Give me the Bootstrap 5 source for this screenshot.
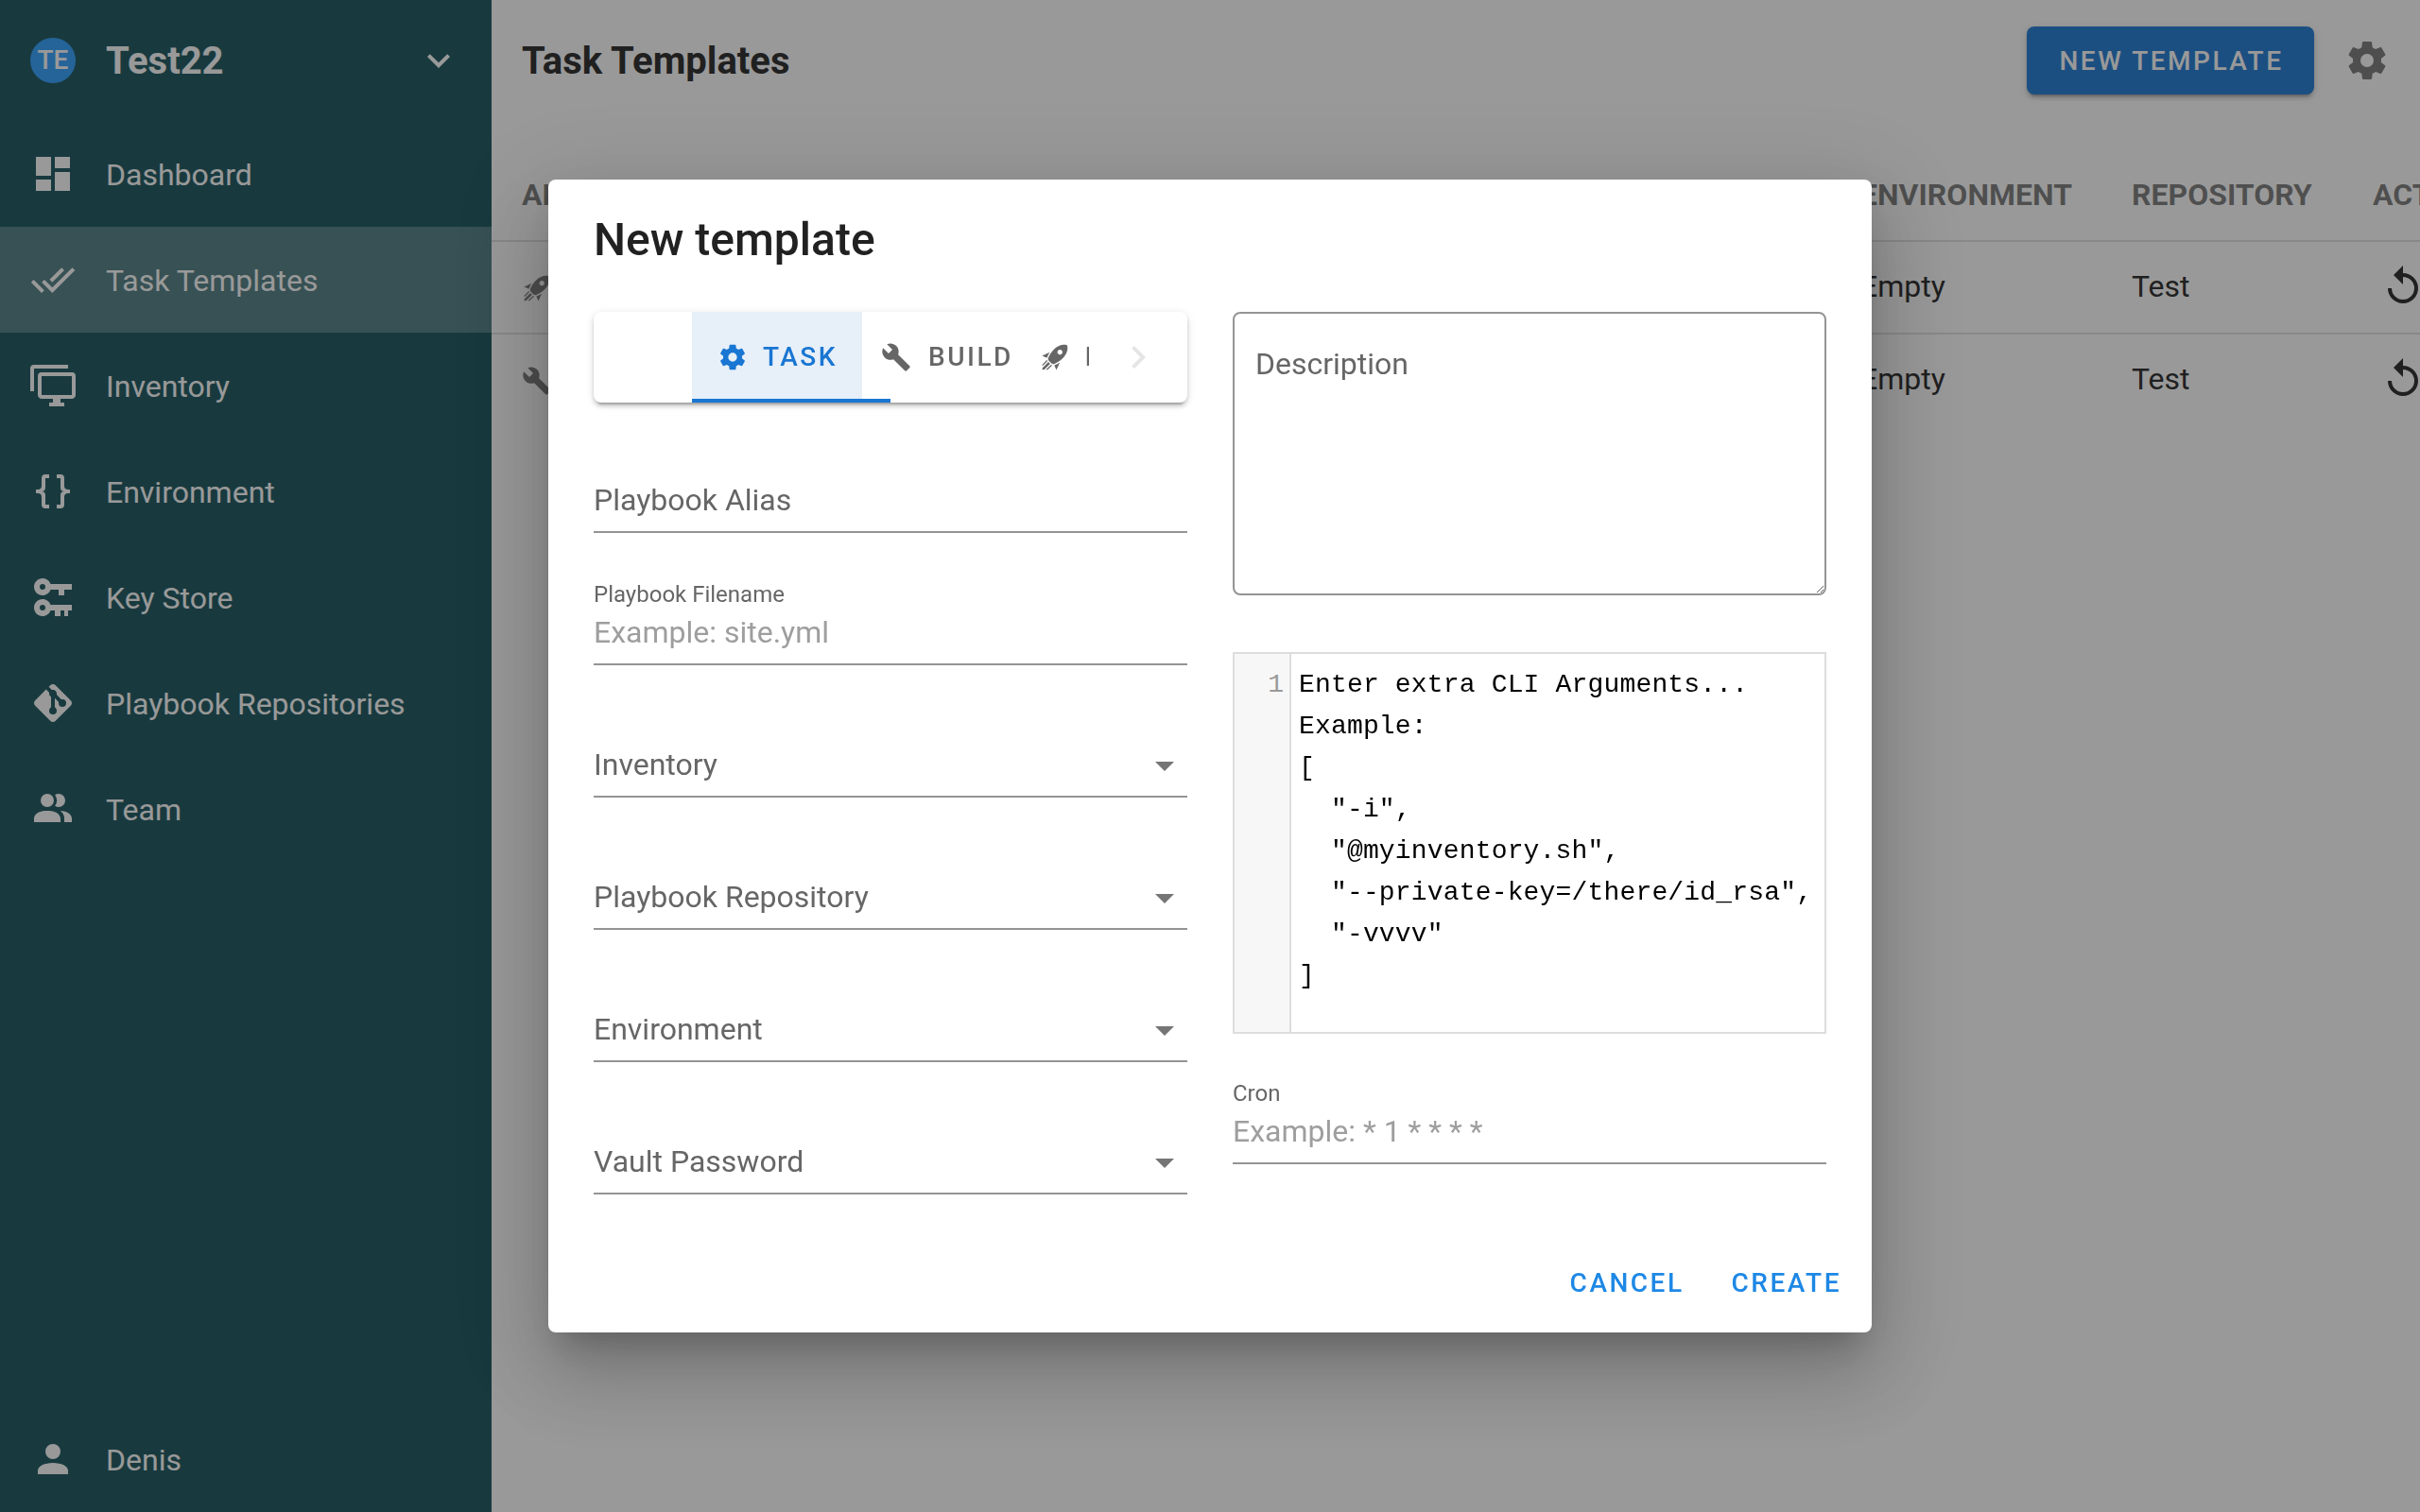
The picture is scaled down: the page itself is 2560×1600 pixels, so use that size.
<!DOCTYPE html>
<html lang="en">
<head>
<meta charset="utf-8">
<title>Task Templates</title>
<link href="https://cdn.jsdelivr.net/npm/bootstrap@5.3.0/dist/css/bootstrap.min.css" rel="stylesheet">
<style>
html,body{height:100%;overflow:hidden;}
body{font-family:Roboto,"Liberation Sans",sans-serif;font-size:32px;color:#212121;background:#fff;}
svg.ic{display:block;fill:currentColor;flex:none;}
.i48{width:48px;height:48px;}
.i32{width:32px;height:32px;}
.tpl-shell{width:2560px;height:1600px;}
.tpl-side{width:520px;flex:none;background:#125159;color:#fff;}
.tpl-side-head{height:128px;padding:0 32px;}
.tpl-avatar{width:48px;height:48px;border-radius:50%;background:#2a9eff;font-size:28px;font-weight:500;color:#fff;}
.tpl-proj{font-size:40px;font-weight:700;margin-left:32px;line-height:48px;padding-top:2px;}
.tpl-item{height:112px;padding:0 32px;color:#fff;font-size:32px;text-decoration:none;}
.tpl-item:hover{color:#fff;}
.tpl-item.tpl-on{background:rgba(255,255,255,.24);}
.tpl-item span{margin-left:32px;padding-top:2px;}
.tpl-main{flex:1 1 auto;min-width:0;overflow:hidden;}
.tpl-top{height:128px;padding:0 0 0 32px;}
.tpl-h{font-size:40px;font-weight:700;line-height:48px;margin:0;padding-top:2px;}
.tpl-newbtn{width:304px;height:72px;padding:2px 0 0 2px;background:#1976d2;border:0;border-radius:8px;color:#fff;font-size:28px;font-weight:500;letter-spacing:2.5px;box-shadow:0 6px 2px -4px rgba(0,0,0,.2),0 4px 4px 0 rgba(0,0,0,.14),0 2px 10px 0 rgba(0,0,0,.12);}
.tpl-gear{color:rgba(0,0,0,.54);margin-left:32px;margin-right:32px;}
.tpl-tablewrap{margin-top:30px;overflow:hidden;}
.tpl-table{table-layout:fixed;width:2160px;margin:0;border-collapse:separate;border-spacing:0;}
.tpl-table th,.tpl-table td{padding:0 32px;vertical-align:middle;border-bottom:2px solid rgba(0,0,0,.12);box-shadow:none;background:transparent;white-space:nowrap;}
.tpl-table th{height:98px;font-size:32px;font-weight:700;color:rgba(0,0,0,.54);letter-spacing:0;}
.tpl-table td{height:98px;font-size:32px;color:#212121;padding-bottom:2px;}
.tpl-table tr:last-child td{border-bottom:0;height:96px;}
.tpl-acticon{margin-left:8px;}
.tpl-rowicon{color:rgba(0,0,0,.54);margin-top:4px;}
.tpl-backdrop{background:#212121;}
.tpl-backdrop.show{opacity:.46;}
.tpl-dialog{max-width:none;width:1400px;margin:190px auto 0;}
.tpl-dialog .modal-content{height:1220px;border:0;border-radius:8px;box-shadow:0 22px 30px -14px rgba(0,0,0,.2),0 48px 76px 6px rgba(0,0,0,.14),0 18px 92px 16px rgba(0,0,0,.12);padding:0;}
.tpl-title{font-size:48px;font-weight:500;line-height:64px;margin:0;padding:32px 48px 44px;height:140px;color:#212121;}
.tpl-cols{padding:0 48px;gap:48px;}
.tpl-col{width:628px;flex:none;}
.tpl-tabs{height:96px;border-radius:8px;background:#fff;box-shadow:0 6px 2px -4px rgba(0,0,0,.2),0 4px 4px 0 rgba(0,0,0,.14),0 2px 10px 0 rgba(0,0,0,.12);}
.tpl-tabsarrow{width:104px;flex:none;}
.tpl-tabclip{width:420px;flex:none;overflow:hidden;position:relative;height:96px;}
.tpl-tab{height:96px;flex:none;padding:0 8px 0 20px;font-size:28px;font-weight:500;letter-spacing:2.5px;color:rgba(0,0,0,.6);white-space:nowrap;}
.tpl-tab span{margin-left:18px;}
.tpl-tab.tpl-last span{margin-left:16px;}
.tpl-tab.tpl-act{color:#1976d2;background:#e7eff9;padding:0 27px;width:180px;}
.tpl-tab.tpl-act span{margin-left:16px;}
.tpl-slider{position:absolute;left:0;bottom:0;width:210px;height:4px;background:#1976d2;}
.tpl-chev{color:rgba(0,0,0,.1);}
.tpl-field{height:140px;border-bottom:2px solid #949494;padding-bottom:16px;}
.tpl-field-first{height:138px;}
.tpl-cap{font-size:24px;line-height:28px;color:#666;margin-bottom:9px;}
.tpl-lab{font-size:32px;line-height:34px;color:#666;}
.tpl-input{border:0;outline:0;padding:0;margin:0;width:100%;height:34px;line-height:34px;font-size:32px;background:transparent;color:#212121;box-shadow:none;border-radius:0;}
.tpl-input::placeholder{color:#9e9e9e;opacity:1;}
.tpl-input:focus{box-shadow:none;background:transparent;}
.tpl-caret{width:0;height:0;border-left:10px solid transparent;border-right:10px solid transparent;border-top:10px solid #757575;margin:0 14px 10px 0;}
.tpl-desc{width:628px;height:300px;border:2px solid #949494;border-radius:8px;padding:28px 22px 0;font-size:32px;line-height:50px;color:#212121;resize:vertical;box-shadow:none;}
.tpl-desc::placeholder{color:#666;opacity:1;}
.tpl-desc:focus{border-color:#949494;box-shadow:none;}
.tpl-code{margin-top:60px;height:404px;border:2px solid #ddd;background:#fff;}
.tpl-gutter{width:60px;flex:none;background:#f7f7f7;border-right:2px solid #ddd;padding:11px 6px 0 0;text-align:right;color:#999;font-family:"Liberation Mono",monospace;font-size:28px;line-height:44px;}
.tpl-lines{margin:0;padding:11px 0 0 8px;font-family:"Liberation Mono",monospace;font-size:28px;line-height:44px;letter-spacing:.17px;color:#000;overflow:hidden;white-space:pre;flex:1;}
.tpl-cron{height:138px;}
.tpl-foot{padding:0 16px 16px;margin-top:auto;height:116px;gap:18px;}
.tpl-txtbtn{background:transparent;border:0;padding:0 16px;height:72px;font-size:28px;font-weight:500;letter-spacing:2.5px;color:#1e88e5;}
.tpl-body{flex:1 1 auto;}
</style>
</head>
<body>
<svg width="0" height="0" class="position-absolute">
<defs>
<symbol id="m-dash" viewBox="0 0 24 24"><path d="M13,3V9H21V3M13,21H21V11H13M3,21H11V15H3M3,13H11V3H3V13Z"/></symbol>
<symbol id="m-check" viewBox="0 0 24 24"><path d="M0.41,13.41L6,19L7.41,17.58L1.83,12M22.24,5.58L11.66,16.17L7.5,12L6.07,13.41L11.66,19L23.66,7M18,7L16.59,5.58L10.24,11.93L11.66,13.34L18,7Z"/></symbol>
<symbol id="m-mon" viewBox="0 0 24 24"><path d="M22,17V7H6V17H22M22,5A2,2 0 0,1 24,7V17C24,18.11 23.1,19 22,19H16V21H18V23H10V21H12V19H6C4.89,19 4,18.1 4,17V7A2,2 0 0,1 6,5H22M2,3V15H0V3A2,2 0 0,1 2,1H20V3H2Z"/></symbol>
<symbol id="m-braces" viewBox="0 0 24 24"><path d="M8,3A2,2 0 0,0 6,5V9A2,2 0 0,1 4,11H3V13H4A2,2 0 0,1 6,15V19A2,2 0 0,0 8,21H10V19H8V14A2,2 0 0,0 6,12A2,2 0 0,0 8,10V5H10V3M16,3A2,2 0 0,1 18,5V9A2,2 0 0,0 20,11H21V13H20A2,2 0 0,0 18,15V19A2,2 0 0,1 16,21H14V19H16V14A2,2 0 0,1 18,12A2,2 0 0,1 16,10V5H14V3H16Z"/></symbol>
<symbol id="m-key" viewBox="0 0 24 24"><path d="M6.5,2C8.46,2 10.13,3.25 10.74,5H22V8H18V11H15V8H10.74C10.13,9.75 8.46,11 6.5,11C4,11 2,9 2,6.5C2,4 4,2 6.5,2M6.5,5A1.5,1.5 0 0,0 5,6.5A1.5,1.5 0 0,0 6.5,8A1.5,1.5 0 0,0 8,6.5A1.5,1.5 0 0,0 6.5,5M6.5,13C8.46,13 10.13,14.25 10.74,16H22V19H20V22H18V19H16V22H13V19H10.74C10.13,20.75 8.46,22 6.5,22C4,22 2,20 2,17.5C2,15 4,13 6.5,13M6.5,16A1.5,1.5 0 0,0 5,17.5A1.5,1.5 0 0,0 6.5,19A1.5,1.5 0 0,0 8,17.5A1.5,1.5 0 0,0 6.5,16Z"/></symbol>
<symbol id="m-git" viewBox="0 0 24 24"><path d="M2.6,10.59L8.38,4.8L10.07,6.5C9.83,7.35 10.22,8.28 11,8.73V14.27C10.4,14.61 10,15.26 10,16A2,2 0 0,0 12,18A2,2 0 0,0 14,16C14,15.26 13.6,14.61 13,14.27V9.41L15.07,11.5C15,11.65 15,11.82 15,12A2,2 0 0,0 17,14A2,2 0 0,0 19,12A2,2 0 0,0 17,10C16.82,10 16.65,10 16.5,10.07L13.93,7.5C14.19,6.57 13.71,5.55 12.78,5.16C12.35,5 11.9,4.96 11.5,5.07L9.8,3.38L10.59,2.6C11.37,1.81 12.63,1.81 13.41,2.6L21.4,10.59C22.19,11.37 22.19,12.63 21.4,13.41L13.41,21.4C12.63,22.19 11.37,22.19 10.59,21.4L2.6,13.41C1.81,12.63 1.81,11.37 2.6,10.59Z"/></symbol>
<symbol id="m-team" viewBox="0 0 24 24"><path d="M16 17V19H2V17S2 13 9 13 16 17 16 17M12.5 7.5A3.5 3.5 0 1 0 9 11A3.5 3.5 0 0 0 12.5 7.5M15.94 13A5.32 5.32 0 0 1 18 17V19H22V17S22 13.37 15.94 13M15 4A3.39 3.39 0 0 0 13.07 4.59A5 5 0 0 1 13.07 10.41A3.39 3.39 0 0 0 15 11A3.5 3.5 0 0 0 15 4Z"/></symbol>
<symbol id="m-user" viewBox="0 0 24 24"><path d="M12,4A4,4 0 0,1 16,8A4,4 0 0,1 12,12A4,4 0 0,1 8,8A4,4 0 0,1 12,4M12,14C16.42,14 20,15.79 20,18V20H4V18C4,15.79 7.58,14 12,14Z"/></symbol>
<symbol id="m-down" viewBox="0 0 24 24"><path d="M7.41,8.58L12,13.17L16.59,8.58L18,10L12,16L6,10L7.41,8.58Z"/></symbol>
<symbol id="m-right" viewBox="0 0 24 24"><path d="M8.59,16.58L13.17,12L8.59,7.41L10,6L16,12L10,18L8.59,16.58Z"/></symbol>
<symbol id="m-cog" viewBox="0 0 24 24"><path d="M12,15.5A3.5,3.5 0 0,1 8.5,12A3.5,3.5 0 0,1 12,8.5A3.5,3.5 0 0,1 15.5,12A3.5,3.5 0 0,1 12,15.5M19.43,12.97C19.47,12.65 19.5,12.33 19.5,12C19.5,11.67 19.47,11.34 19.43,11L21.54,9.37C21.73,9.22 21.78,8.95 21.66,8.73L19.66,5.27C19.54,5.05 19.27,4.96 19.05,5.05L16.56,6.05C16.04,5.66 15.5,5.32 14.87,5.07L14.5,2.42C14.46,2.18 14.25,2 14,2H10C9.75,2 9.54,2.18 9.5,2.42L9.13,5.07C8.5,5.32 7.96,5.66 7.44,6.05L4.95,5.05C4.73,4.96 4.46,5.05 4.34,5.27L2.34,8.73C2.21,8.95 2.27,9.22 2.46,9.37L4.57,11C4.53,11.34 4.5,11.67 4.5,12C4.5,12.33 4.53,12.65 4.57,12.97L2.46,14.63C2.27,14.78 2.21,15.05 2.34,15.27L4.34,18.73C4.46,18.95 4.73,19.03 4.95,18.95L7.44,17.94C7.96,18.34 8.5,18.68 9.13,18.93L9.5,21.58C9.54,21.82 9.75,22 10,22H14C14.25,22 14.46,21.82 14.5,21.58L14.87,18.93C15.5,18.67 16.04,18.34 16.56,17.94L19.05,18.95C19.27,19.03 19.54,18.95 19.66,18.73L21.66,15.27C21.78,15.05 21.73,14.78 21.54,14.63L19.43,12.97Z"/></symbol>
<symbol id="m-wrench" viewBox="0 0 24 24"><path d="M22.7,19L13.6,9.9C14.5,7.6 14,4.9 12.1,3C10.1,1 7.1,0.6 4.7,1.7L9,6L6,9L1.6,4.7C0.4,7.1 0.9,10.1 2.9,12.1C4.8,14 7.5,14.5 9.8,13.6L18.9,22.7C19.3,23.1 19.9,23.1 20.3,22.7L22.6,20.4C23.1,20 23.1,19.3 22.7,19Z"/></symbol>
<symbol id="m-rocket" viewBox="0 0 24 24"><path d="M13.13 22.19L11.5 18.36C13.07 17.78 14.54 17 15.9 16.09L13.13 22.19M5.64 12.5L1.81 10.87L7.91 8.1C7 9.46 6.22 10.93 5.64 12.5M21.61 2.39C21.61 2.39 16.66 .269 11 5.93C8.81 8.12 7.5 10.53 6.65 12.64C6.37 13.39 6.56 14.21 7.11 14.77L9.24 16.89C9.79 17.45 10.61 17.63 11.36 17.35C13.5 16.53 15.88 15.19 18.07 13C23.73 7.34 21.61 2.39 21.61 2.39M14.54 9.46C13.76 8.68 13.76 7.41 14.54 6.63S16.59 5.85 17.37 6.63C18.14 7.41 18.15 8.68 17.37 9.46C16.59 10.24 15.32 10.24 14.54 9.46M6.24 22L9.88 18.36C9.54 18.27 9.21 18.12 8.91 17.91L4.83 22H6.24M2 22H3.41L8.18 17.24L6.76 15.83L2 20.59V22M2 19.17L6.09 15.09C5.88 14.79 5.73 14.47 5.64 14.12L2 17.76V19.17Z"/></symbol>
<symbol id="m-replay" viewBox="0 0 24 24"><path d="M12,5V1L7,6L12,11V7A6,6 0 0,1 18,13A6,6 0 0,1 12,19A6,6 0 0,1 6,13H4A8,8 0 0,0 12,21A8,8 0 0,0 20,13A8,8 0 0,0 12,5Z"/></symbol>
</defs>
</svg>

<div class="tpl-shell d-flex">
  <nav class="tpl-side d-flex flex-column">
    <div class="tpl-side-head d-flex align-items-center">
      <div class="tpl-avatar d-flex align-items-center justify-content-center">TE</div>
      <div class="tpl-proj flex-grow-1">Test22</div>
      <svg class="ic i48"><use href="#m-down"/></svg>
    </div>
    <a class="tpl-item d-flex align-items-center" href="#"><svg class="ic i48"><use href="#m-dash"/></svg><span>Dashboard</span></a>
    <a class="tpl-item tpl-on d-flex align-items-center" href="#"><svg class="ic i48"><use href="#m-check"/></svg><span>Task Templates</span></a>
    <a class="tpl-item d-flex align-items-center" href="#"><svg class="ic i48"><use href="#m-mon"/></svg><span>Inventory</span></a>
    <a class="tpl-item d-flex align-items-center" href="#"><svg class="ic i48"><use href="#m-braces"/></svg><span>Environment</span></a>
    <a class="tpl-item d-flex align-items-center" href="#"><svg class="ic i48"><use href="#m-key"/></svg><span>Key Store</span></a>
    <a class="tpl-item d-flex align-items-center" href="#"><svg class="ic i48"><use href="#m-git"/></svg><span>Playbook Repositories</span></a>
    <a class="tpl-item d-flex align-items-center" href="#"><svg class="ic i48"><use href="#m-team"/></svg><span>Team</span></a>
    <a class="tpl-item d-flex align-items-center mt-auto" href="#"><svg class="ic i48"><use href="#m-user"/></svg><span>Denis</span></a>
  </nav>
  <main class="tpl-main">
    <div class="tpl-top d-flex align-items-center">
      <h1 class="tpl-h flex-grow-1">Task Templates</h1>
      <button class="tpl-newbtn" type="button">NEW TEMPLATE</button>
      <svg class="ic i48 tpl-gear"><use href="#m-cog"/></svg>
    </div>
    <div class="tpl-tablewrap">
      <table class="table tpl-table">
        <colgroup><col style="width:1416px"><col style="width:287px"><col style="width:255px"><col style="width:202px"></colgroup>
        <thead><tr><th>ALIAS</th><th>ENVIRONMENT</th><th>REPOSITORY</th><th>ACTIONS</th></tr></thead>
        <tbody>
          <tr><td><svg class="ic i32 tpl-rowicon"><use href="#m-rocket"/></svg></td><td>Empty</td><td>Test</td><td><svg class="ic i48 tpl-acticon"><use href="#m-replay"/></svg></td></tr>
          <tr><td><svg class="ic i32 tpl-rowicon"><use href="#m-wrench"/></svg></td><td>Empty</td><td>Test</td><td><svg class="ic i48 tpl-acticon"><use href="#m-replay"/></svg></td></tr>
        </tbody>
      </table>
    </div>
  </main>
</div>

<div class="modal-backdrop show tpl-backdrop"></div>
<div class="modal d-block" tabindex="-1">
  <div class="modal-dialog tpl-dialog">
    <div class="modal-content d-flex flex-column">
      <h2 class="tpl-title">New template</h2>
      <div class="tpl-cols d-flex tpl-body">
        <div class="tpl-col">
          <div class="tpl-tabs d-flex">
            <div class="tpl-tabsarrow"></div>
            <div class="tpl-tabclip d-flex">
              <div class="tpl-tab tpl-act d-flex align-items-center"><svg class="ic i32"><use href="#m-cog"/></svg><span>TASK</span></div>
              <div class="tpl-tab d-flex align-items-center"><svg class="ic i32"><use href="#m-wrench"/></svg><span>BUILD</span></div>
              <div class="tpl-tab tpl-last d-flex align-items-center"><svg class="ic i32"><use href="#m-rocket"/></svg><span>DEPLOY</span></div>
              <div class="tpl-slider"></div>
            </div>
            <div class="tpl-tabsarrow d-flex align-items-center justify-content-center"><svg class="ic i48 tpl-chev"><use href="#m-right"/></svg></div>
          </div>
          <div class="tpl-field tpl-field-first d-flex flex-column justify-content-end"><div class="tpl-lab">Playbook Alias</div></div>
          <div class="tpl-field d-flex flex-column justify-content-end">
            <label class="tpl-cap">Playbook Filename</label>
            <input class="form-control tpl-input" type="text" placeholder="Example: site.yml">
          </div>
          <div class="tpl-field d-flex align-items-end justify-content-between"><div class="tpl-lab">Inventory</div><div class="tpl-caret"></div></div>
          <div class="tpl-field d-flex align-items-end justify-content-between"><div class="tpl-lab">Playbook Repository</div><div class="tpl-caret"></div></div>
          <div class="tpl-field d-flex align-items-end justify-content-between"><div class="tpl-lab">Environment</div><div class="tpl-caret"></div></div>
          <div class="tpl-field d-flex align-items-end justify-content-between"><div class="tpl-lab">Vault Password</div><div class="tpl-caret"></div></div>
        </div>
        <div class="tpl-col">
          <textarea class="form-control tpl-desc" placeholder="Description"></textarea>
          <div class="tpl-code d-flex">
            <div class="tpl-gutter">1</div>
            <pre class="tpl-lines">Enter extra CLI Arguments...
Example:
[
  "-i",
  "@myinventory.sh",
  "--private-key=/there/id_rsa",
  "-vvvv"
]</pre>
          </div>
          <div class="tpl-field tpl-cron d-flex flex-column justify-content-end">
            <label class="tpl-cap">Cron</label>
            <input class="form-control tpl-input" type="text" placeholder="Example: * 1 * * * *">
          </div>
        </div>
      </div>
      <div class="tpl-foot d-flex align-items-end justify-content-end">
        <button class="tpl-txtbtn" type="button">CANCEL</button>
        <button class="tpl-txtbtn" type="button">CREATE</button>
      </div>
    </div>
  </div>
</div>
<script src="https://cdn.jsdelivr.net/npm/bootstrap@5.3.0/dist/js/bootstrap.bundle.min.js"></script>
</body>
</html>
